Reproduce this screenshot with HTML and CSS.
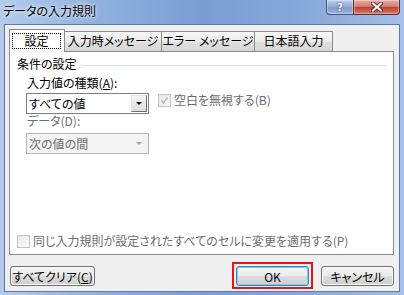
FILE: index.html
```html
<!DOCTYPE html>
<html lang="ja">
<head>
  <meta charset="UTF-8">
  <title>データの入力規則</title>
  <link rel="stylesheet" href="styles.css">
</head>
<body>

  <div class="window">
    <div class="titlebar">
      <span class="title">データの入力規則</span>
      <div class="caption-buttons">
        <span class="cap-btn help">?</span>
        <span class="cap-btn close">
          <svg width="12" height="10" viewBox="0 0 12 10">
            <path d="M2 1.5 L10 8.5 M10 1.5 L2 8.5" stroke="#5b3030" stroke-width="4" stroke-linecap="square"/>
            <path d="M2 1.5 L10 8.5 M10 1.5 L2 8.5" stroke="#fff" stroke-width="2" stroke-linecap="square"/>
          </svg>
        </span>
      </div>
    </div>

    <div class="client">
      <div class="tabs">
        <div class="tab selected"><span class="focus">設定</span></div>
        <div class="tab t2">入力時メッセージ</div>
        <div class="tab t3">エラー メッセージ</div>
        <div class="tab t4">日本語入力</div>
      </div>

      <div class="panel">
        <div class="group-title">
          <span>条件の設定</span>
          <span class="group-line"></span>
        </div>

        <div class="fields">
          <label class="field-label">入力値の種類(<u>A</u>):</label>
          <div class="row">
            <div class="combo">
              <span class="combo-text">すべての値</span>
              <span class="drop-btn"><span class="arrow"></span></span>
            </div>
            <label class="check disabled">
              <span class="box">
                <svg width="11" height="11" viewBox="0 0 11 11">
                  <path d="M2.5 5.5 L4.5 8 L8.5 2.5" fill="none" stroke="#b4b4b4" stroke-width="1.6"/>
                </svg>
              </span>
              空白を無視する(B)
            </label>
          </div>
          <label class="field-label disabled">データ(D):</label>
          <div class="combo disabled">
            <span class="combo-text">次の値の間</span>
            <span class="drop-btn"><span class="arrow"></span></span>
          </div>
        </div>

        <label class="check disabled bottom-check">
          <span class="box"></span>
          同じ入力規則が設定されたすべてのセルに変更を適用する(P)
        </label>
      </div>

      <div class="buttons">
        <button class="btn clear">すべてクリア(<u>C</u>)</button>
        <span class="ok-mark"><button class="btn ok">OK</button></span>
        <button class="btn cancel">キャンセル</button>
      </div>
    </div>
  </div>

</body>
</html>
```

FILE: styles.css
```css
* {
  box-sizing: border-box;
  margin: 0;
  padding: 0;
}

body {
  font-family: "Noto Sans CJK JP", "Noto Sans", sans-serif;
  font-size: 12px;
  font-feature-settings: "palt";
  color: #000;
  background: #fff;
}

.window {
  width: 404px;
  height: 295px;
  display: flex;
  flex-direction: column;
  background: linear-gradient(to right, #b4cbec 0%, #93b2df 22%, #7a9dd3 50%, #8aaadb 78%, #a4c0e8 100%);
}

/* title bar */
.titlebar {
  height: 24px;
  display: flex;
  align-items: flex-start;
}

.title {
  padding: 3px 0 0 3px;
  line-height: 15px;
  text-shadow: 0 0 6px #e6f0fb, 0 0 3px #e6f0fb;
}

.caption-buttons {
  display: flex;
  margin-left: auto;
  margin-right: 4px;
}

.cap-btn {
  height: 15px;
  display: flex;
  align-items: center;
  justify-content: center;
  border: 1px solid #3f5274;
  border-top: none;
  box-shadow: inset 0 0 0 1px rgba(255, 255, 255, 0.35);
}

.help {
  width: 28px;
  border-radius: 0 0 0 4px;
  background: linear-gradient(#bccfec, #93acd9 50%, #7d98cc 51%, #9cb5e0);
  color: #fff;
  font-family: "DejaVu Sans", sans-serif;
  font-weight: bold;
  font-size: 11px;
  line-height: 13px;
  text-shadow: 0 0 2px #344766, 0 0 1px #344766;
}

.close {
  width: 47px;
  margin-left: -1px;
  border-radius: 0 0 4px 0;
  border-color: #5a2a2a;
  background: linear-gradient(#e7aea4, #d0786b 50%, #bd3f2e 51%, #d57a69);
}

/* client area */
.client {
  flex: 1;
  margin: 0 4px 3px;
  border: 1px solid #5d7aa7;
  background: #f0f0f0;
  padding: 4px 5px 0 4px;
  display: flex;
  flex-direction: column;
}

.tabs {
  height: 22px;
  display: flex;
  align-items: flex-end;
  position: relative;
  z-index: 1;
}

.tab {
  height: 20px;
  margin-left: -1px;
  padding-top: 2px;
  line-height: 14px;
  text-align: center;
  border: 1px solid #898c95;
  border-bottom: none;
  background: linear-gradient(#f6f6f6, #ececec 50%, #e0e0e0 51%, #d6d6d6);
  white-space: nowrap;
}

.tab.selected {
  width: 56px;
  height: 23px;
  margin-left: 0;
  margin-bottom: -1px;
  padding: 3px 3px 0 2px;
  background: #fff;
}

.focus {
  display: block;
  height: 16px;
  line-height: 14px;
  border: 1px dotted #000;
}

.t2 { width: 98px; }
.t3 { width: 94px; }
.t4 { width: 79px; }

.panel {
  height: 204px;
  border: 1px solid #898c95;
  background: #fff;
  display: flex;
  flex-direction: column;
}

.group-title {
  display: flex;
  align-items: flex-start;
  padding: 5px 7px 0 7px;
  line-height: 14px;
}

.group-line {
  flex: 1;
  height: 1px;
  margin: 8px 0 0 4px;
  background: #d5dfe5;
}

.fields {
  padding-left: 16px;
}

.field-label {
  display: block;
  margin: 5px 0 0 1px;
  line-height: 14px;
}

.field-label + .row {
  margin-top: 3px;
}

.field-label.disabled {
  margin-top: 0;
}

.disabled {
  color: #6d6d6d;
}

.row {
  display: flex;
  align-items: flex-start;
}

.combo {
  width: 123px;
  height: 21px;
  padding: 1px;
  display: flex;
  align-items: stretch;
  border: 1px solid #7a7d84;
  background: #fff;
}

.combo.disabled {
  margin-top: 5px;
  border-color: #b3b6bb;
  background: #f4f4f4;
}

.combo-text {
  flex: 1;
  padding-left: 1px;
  line-height: 17px;
}

.drop-btn {
  width: 16px;
  display: flex;
  align-items: center;
  justify-content: center;
  border: 1px solid #8e8e8e;
  border-color: #e3e3e3 #6f6f6f #6f6f6f #e3e3e3;
  background: linear-gradient(#f6f6f6, #dcdcdc);
}

.combo.disabled .drop-btn {
  border-color: transparent;
  background: none;
}

.arrow {
  width: 0;
  height: 0;
  border-left: 3px solid transparent;
  border-right: 3px solid transparent;
  border-top: 3px solid #000;
}

.combo.disabled .arrow {
  border-top-color: #a6a6a6;
}

.check {
  display: flex;
  align-items: center;
  gap: 3px;
  line-height: 14px;
}

.row .check {
  margin: 0 0 0 9px;
}

.box {
  width: 13px;
  height: 13px;
  display: flex;
  align-items: center;
  justify-content: center;
  border: 1px solid #c2c2c2;
  background: linear-gradient(135deg, #e8e8e8, #fbfbfb);
}

.bottom-check {
  margin-top: auto;
  padding: 0 0 6px 7px;
}

/* dialog buttons */
.buttons {
  display: flex;
  align-items: flex-start;
  margin-top: 11px;
  padding-left: 1px;
}

.btn {
  height: 20px;
  font-family: inherit;
  font-size: 12px;
  font-feature-settings: "palt";
  color: #000;
  border: 1px solid #707070;
  border-radius: 3px;
  background: linear-gradient(#f4f4f4, #ebebeb 50%, #dcdcdc 51%, #cfcfcf);
  box-shadow: inset 0 0 0 1px #fbfbfb;
}

.clear {
  width: 85px;
}

/* red annotation frame round the OK button */
.ok-mark {
  display: flex;
  margin: -4px 0 0 auto;
  padding: 2px 2px 1px 2px;
  border: 2px solid #e8141c;
}

.ok {
  width: 73px;
  border-color: #3c7fb1;
  box-shadow: inset 0 0 0 1px #6fd4f8;
}

.cancel {
  width: 73px;
  margin-left: 8px;
}
```
